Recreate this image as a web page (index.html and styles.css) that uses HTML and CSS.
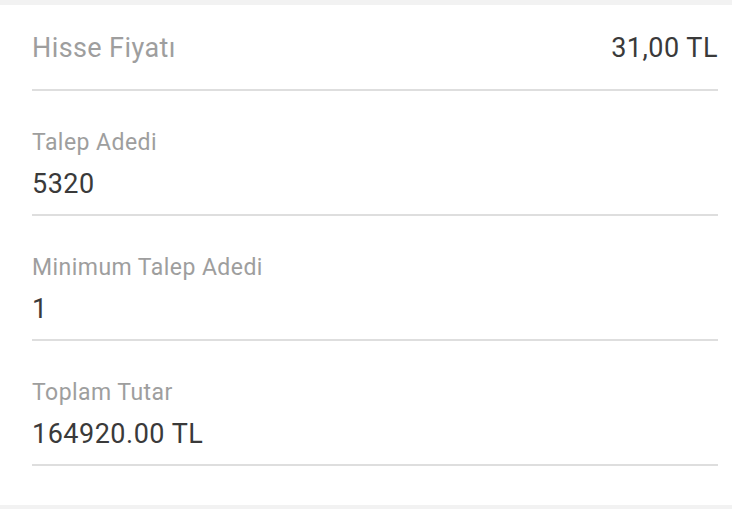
FILE: index.html
```html
<!DOCTYPE html>
<html lang="tr">
<head>
    <meta charset="UTF-8">
    <meta name="viewport" content="width=device-width, initial-scale=1.0">
    <title>Talep Özeti</title>
    <link rel="stylesheet" href="styles.css">
</head>
<body>
    <div class="summary">
        <div class="row row-inline">
            <span class="label-big">Hisse Fiyatı</span>
            <span class="value">31,00 TL</span>
        </div>
        <div class="row">
            <div class="label">Talep Adedi</div>
            <div class="value">5320</div>
        </div>
        <div class="row">
            <div class="label">Minimum Talep Adedi</div>
            <div class="value">1</div>
        </div>
        <div class="row">
            <div class="label">Toplam Tutar</div>
            <div class="value">164920.00 TL</div>
        </div>
    </div>
</body>
</html>
```

FILE: styles.css
```css
body {
    font-family: Roboto, 'Noto Sans', sans-serif;
    background-color: #f2f2f2;
    margin: 0;
    padding: 5px 0 4px;
}

.summary {
    background: white;
    padding: 0 14px 39px 32px;
}

.row {
    padding: 38px 0 13px;
    border-bottom: 2px solid #dedede;
}

.row-inline {
    display: flex;
    justify-content: space-between;
    align-items: center;
    padding: 26px 0 24px;
}

.label-big {
    color: #9e9e9e;
    font-size: 27px;
    line-height: 34px;
    letter-spacing: 0.4px;
}

.label {
    color: #9e9e9e;
    font-size: 23px;
    line-height: 28px;
    letter-spacing: 0.45px;
}

.value {
    color: #3a3a3a;
    font-size: 27px;
    line-height: 34px;
    letter-spacing: 0.5px;
}

.row .label + .value {
    margin-top: 10px;
}
```
